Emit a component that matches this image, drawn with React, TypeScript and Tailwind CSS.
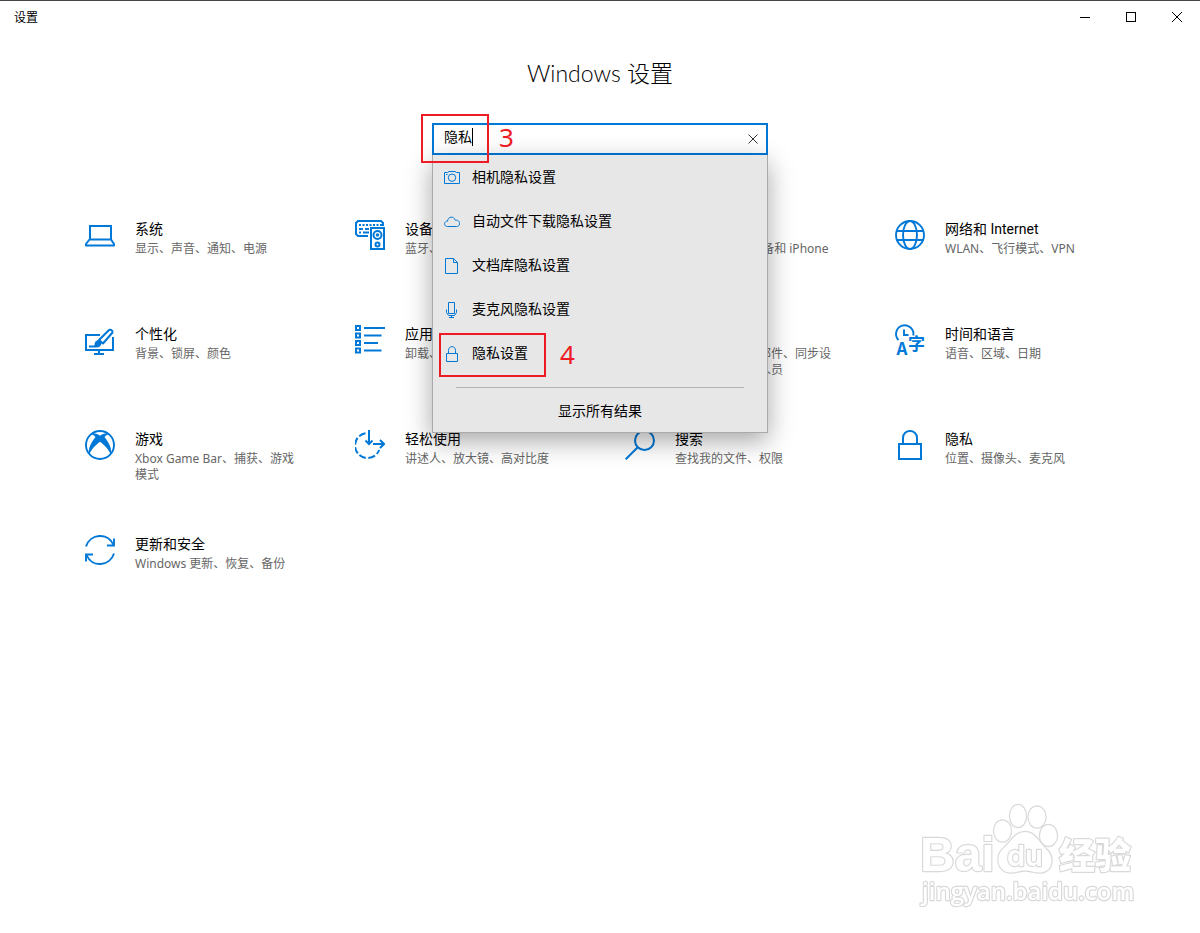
import { useState, type ReactNode } from "react";

type Tile = {
  title: string;
  description: string;
  icon: ReactNode;
};

const LaptopIcon = () => (
  <svg viewBox="0 0 30 30" className="h-[30px] w-[30px] shrink-0" fill="none" stroke="currentColor" strokeWidth="2">
    <path d="M5 19.500V6H26V19.500" />
    <path d="M5 19.500H26L29 24V25.500H1V24L4.500 19.500Z" strokeLinejoin="round" />
  </svg>
);

const DevicesIcon = () => (
  <svg viewBox="0 0 30 30" className="h-[30px] w-[30px] shrink-0" fill="none" stroke="currentColor" strokeWidth="2">
    <path d="M13 16H3L1 14V3L3 1H26L28 3V6" />
    <path d="M4 5H27" strokeDasharray="2 1.500" />
    <path d="M4 9H14" strokeDasharray="4 2 4" />
    <path d="M4 12.500H14" strokeDasharray="2 2 6" />
    <rect x="16" y="8" width="13" height="21" />
    <circle cx="22.500" cy="15" r="4" />
    <circle cx="22.500" cy="15" r="0.800" />
    <circle cx="22.500" cy="24.500" r="2" />
  </svg>
);

const PhoneIcon = () => (
  <svg viewBox="0 0 30 30" className="h-[30px] w-[30px] shrink-0" fill="none" stroke="currentColor" strokeWidth="2">
    <rect x="7" y="1" width="16" height="28" />
    <path d="M12 25H18" />
  </svg>
);

const GlobeIcon = () => (
  <svg viewBox="0 0 30 30" className="h-[30px] w-[30px] shrink-0" fill="none" stroke="currentColor" strokeWidth="1.900">
    <circle cx="15" cy="15" r="14" />
    <ellipse cx="15" cy="15" rx="7" ry="14" />
    <path d="M2 11H28M2 20H28" />
  </svg>
);

const PersonalizationIcon = () => (
  <svg viewBox="0 0 30 30" className="h-[30px] w-[30px] shrink-0" fill="none" stroke="currentColor" strokeWidth="2">
    <path d="M15 10H1V25H28V12" />
    <path d="M14 25V29M9 29H19" />
    <path d="M14 15L23.500 5.500C25 4 28 5 27.500 7.500L18 18.500Z" strokeLinejoin="round" />
    <path d="M4 21.500H8C10 21.500 9.500 16 13.500 16C16 16 17 18 15.500 20C14 22 11.500 21.500 8 21.500Z" fill="currentColor" stroke="none" />
    <path d="M4 21.500H11C14 21.500 16 20 15.500 17.500C14 15 11 16 10.500 19" />
  </svg>
);

const AppsIcon = () => (
  <svg viewBox="0 0 30 30" className="h-[30px] w-[30px] shrink-0" fill="none" stroke="currentColor" strokeWidth="2">
    <path d="M1 1H5V5H1ZM1 8.500H5V12.500H1ZM1 16H5V20H1ZM1 23.500H5V27.500H1Z" />
    <path d="M9 3H30M9 10.500H26.500M9 18H23M9 25.500H26.500" />
  </svg>
);

const AccountIcon = () => (
  <svg viewBox="0 0 30 30" className="h-[30px] w-[30px] shrink-0" fill="none" stroke="currentColor" strokeWidth="2">
    <circle cx="15" cy="8" r="7" />
    <path d="M3 29C3 12 27 12 27 29" />
  </svg>
);

const LanguageIcon = () => (
  <svg viewBox="0 0 30 30" className="h-[30px] w-[30px] shrink-0 overflow-visible" fill="none" stroke="currentColor" strokeWidth="1.900">
    <path d="M3.500 15A8.700 8.700 0 1 1 18.300 10.500" />
    <path d="M9 4.500V10H13.500" />
    <text x="1.500" y="30" fill="currentColor" stroke="none" fontSize="17" fontWeight="700" fontFamily="Noto Sans CJK SC, sans-serif">A</text>
    <text x="13" y="25" fill="currentColor" stroke="none" fontSize="17" fontWeight="700" fontFamily="Noto Sans CJK SC, sans-serif">字</text>
  </svg>
);

const XboxIcon = () => (
  <svg viewBox="0 0 30 30" className="h-[30px] w-[30px] shrink-0" fill="none" stroke="currentColor" strokeWidth="1.900">
    <circle cx="15" cy="15" r="14" />
    <path
      d="M6.500 3.500C9.500 2.800 13 4.300 15 5.700C17 4.300 20.500 2.800 23.500 3.500L22.500 4.800C21.500 5 20.500 5.800 19.500 7C23.500 12 27.500 18.500 25.700 24.500C24 20 19.500 15 15 11.800C10.500 15 6 20 4.300 24.500C2.500 18.500 6.500 12 10.500 7C9.500 5.800 8.500 5 7.500 4.800Z"
      fill="currentColor"
      stroke="none"
    />
  </svg>
);

const EaseIcon = () => (
  <svg viewBox="0 0 30 30" className="h-[30px] w-[30px] shrink-0" fill="none" stroke="currentColor" strokeWidth="2">
    <path d="M10.500 3.200A12.500 12.500 0 1 0 24.200 20" strokeDasharray="7 2.400" />
    <path d="M14 0V14M10.500 10.500L14 14L17.500 10.500" />
    <path d="M18 14H29M25 10L29 14L25 18" />
  </svg>
);

const SearchIcon = () => (
  <svg viewBox="0 0 30 30" className="h-[30px] w-[30px] shrink-0" fill="none" stroke="currentColor" strokeWidth="2">
    <circle cx="19.500" cy="10.500" r="9.500" />
    <path d="M12.500 17.500L0.700 29.300" />
  </svg>
);

const LockIcon = () => (
  <svg viewBox="0 0 30 30" className="h-[30px] w-[30px] shrink-0" fill="none" stroke="currentColor" strokeWidth="2">
    <rect x="4" y="14" width="22" height="15" />
    <path d="M8 14V8C8 -1.300 22 -1.300 22 8V14" />
  </svg>
);

const UpdateIcon = () => (
  <svg viewBox="0 0 30 30" className="h-[30px] w-[30px] shrink-0" fill="none" stroke="currentColor" strokeWidth="1.900">
    <path d="M1 11.500C5 -1.500 23 -3 28.500 10" />
    <path d="M29 3.500V10.500H22" />
    <path d="M29 18.500C25 31.500 7 33 1.500 20" />
    <path d="M1 26.500V19.500H8" />
  </svg>
);

const tiles: Tile[] = [
  { title: "系统", description: "显示、声音、通知、电源", icon: <LaptopIcon /> },
  { title: "设备", description: "蓝牙、打印机、鼠标", icon: <DevicesIcon /> },
  { title: "手机", description: "连接 Android 设备和 iPhone", icon: <PhoneIcon /> },
  { title: "网络和 Internet", description: "WLAN、飞行模式、VPN", icon: <GlobeIcon /> },
  { title: "个性化", description: "背景、锁屏、颜色", icon: <PersonalizationIcon /> },
  { title: "应用", description: "卸载、默认应用、可选功能", icon: <AppsIcon /> },
  { title: "帐户", description: "你的帐户、电子邮件、同步设置、工作、其他人员", icon: <AccountIcon /> },
  { title: "时间和语言", description: "语音、区域、日期", icon: <LanguageIcon /> },
  { title: "游戏", description: "Xbox Game Bar、捕获、游戏模式", icon: <XboxIcon /> },
  { title: "轻松使用", description: "讲述人、放大镜、高对比度", icon: <EaseIcon /> },
  { title: "搜索", description: "查找我的文件、权限", icon: <SearchIcon /> },
  { title: "隐私", description: "位置、摄像头、麦克风", icon: <LockIcon /> },
  { title: "更新和安全", description: "Windows 更新、恢复、备份", icon: <UpdateIcon /> },
];

const suggestions = [
  {
    label: "相机隐私设置",
    icon: <path d="M0.500 2.500H3.500L5 1.500H11L12.500 2.500H15.500V13.500H0.500ZM8 4A3.700 3.700 0 1 0 8 11.400A3.700 3.700 0 1 0 8 4ZM2 4.500H3.500" />,
  },
  {
    label: "自动文件下载隐私设置",
    icon: <path d="M3.500 12.500C-0.500 12.500 -0.200 7 3.500 7.200C3.800 2.500 10 1.500 11.300 6.200C16.500 5.500 17 12.500 12.500 12.500Z" />,
  },
  {
    label: "文档库隐私设置",
    icon: <path d="M1.500 0.500H9.500L13.500 4.500V15.500H1.500ZM9.500 0.500V4.500H13.500" />,
  },
  {
    label: "麦克风隐私设置",
    icon: <path d="M4.500 0.500H10.500V11.500H4.500ZM2.500 7.500V10.500L4.500 13.500H10.500L12.500 10.500V7.500M7.500 13.500V15.500M5 15.500H10" strokeLinejoin="round" />,
  },
  {
    label: "隐私设置",
    icon: <path d="M2.500 7.500H13.500V15.500H2.500ZM4.500 7.500V4.500C4.500 -0.700 11.500 -0.700 11.500 4.500V7.500" />,
  },
];

const TitleBar = () => (
  <header className="flex h-[33px] items-center justify-between border-t border-[#444444]">
    <span className="pl-[14px] text-xs">设置</span>
    <div className="flex">
      <button aria-label="最小化" className="flex h-8 w-[46px] items-center justify-center">
        <svg viewBox="0 0 10 10" className="h-[10px] w-[10px]" stroke="currentColor">
          <path d="M0 5.500H10" />
        </svg>
      </button>
      <button aria-label="最大化" className="flex h-8 w-[46px] items-center justify-center">
        <svg viewBox="0 0 10 10" className="h-[10px] w-[10px]" fill="none" stroke="currentColor">
          <rect x="0.500" y="0.500" width="9" height="9" />
        </svg>
      </button>
      <button aria-label="关闭" className="flex h-8 w-[46px] items-center justify-center">
        <svg viewBox="0 0 10 10" className="h-[10px] w-[10px]" stroke="currentColor">
          <path d="M0 0L10 10M10 0L0 10" />
        </svg>
      </button>
    </div>
  </header>
);

const SearchBox = () => {
  const [query, setQuery] = useState("隐私");

  return (
    <div className="relative mx-auto mt-[34px] w-[336px]">
      <div className="flex h-8 items-center border-2 border-[#0078d7] bg-white">
        <input
          type="text"
          aria-label="查找设置"
          value={query}
          onChange={(e) => setQuery(e.target.value)}
          className="h-full min-w-0 flex-1 pb-[6px] pl-[10px] text-sm caret-transparent outline-none"
        />
        <button aria-label="清除" onClick={() => setQuery("")} className="flex h-7 w-[26px] items-center justify-center">
          <svg viewBox="0 0 10 10" className="h-[10px] w-[10px]" stroke="#333333">
            <path d="M0.500 0.500L9.500 9.500M9.500 0.500L0.500 9.500" />
          </svg>
        </button>
      </div>
      <span className="absolute top-[5px] left-10 h-[18px] w-px bg-black" />

      <div className="absolute top-8 left-0 z-10 w-full border border-t-0 border-[#aaaaaa] bg-[#e7e7e7] shadow-[0_8px_24px_rgba(0,0,0,0.35)]">
        <ul className="pt-px">
          {suggestions.map((item) => (
            <li key={item.label}>
              <button className="flex h-11 w-full items-center gap-3 pl-[11px] text-sm">
                <svg viewBox="0 0 16 16" className="h-4 w-4 shrink-0 text-[#0078d7]" fill="none" stroke="currentColor">
                  {item.icon}
                </svg>
                <span className="pb-1">{item.label}</span>
              </button>
            </li>
          ))}
        </ul>
        <div className="mx-[23px] mt-[11px] border-t border-[#b4b4b4]" />
        <button className="flex h-11 w-full items-center justify-center text-sm">显示所有结果</button>
      </div>

      {/* Step markers */}
      <div className="pointer-events-none absolute -top-[9px] -left-[11px] z-20 h-[49px] w-[68px] border-2 border-[#ed1c24]" />
      <span className="absolute -top-0.5 left-[67px] z-20 font-['Noto_Sans',sans-serif] text-[26px] leading-8 text-[#ed1c24]">3</span>
      <div className="pointer-events-none absolute top-[210px] left-[7px] z-20 h-11 w-[107px] border-2 border-[#ed1c24]" />
      <span className="absolute top-[215px] left-32 z-20 font-['Noto_Sans',sans-serif] text-[26px] leading-8 text-[#ed1c24]">4</span>
    </div>
  );
};

const Watermark = () => (
  <svg
    viewBox="0 0 240 120"
    className="pointer-events-none fixed right-[44px] bottom-[13px] h-[120px] w-[240px]"
    fill="#ffffff"
    stroke="#d9d9d9"
    strokeWidth="2.400"
    strokeLinejoin="round"
    style={{ paintOrder: "stroke" }}
  >
    <text x="4" y="71" fontSize="48" fontWeight="700" fontFamily="Liberation Sans, sans-serif">Bai</text>
    <ellipse cx="86.500" cy="31" rx="8.500" ry="10.500" />
    <ellipse cx="102" cy="16" rx="8" ry="11" />
    <ellipse cx="121" cy="17" rx="8.500" ry="10.500" />
    <ellipse cx="132.500" cy="35.500" rx="8.500" ry="10.500" />
    <path d="M109 32C99 32 95 42 88 48C78 56 82 73 95 72.500C100 72.500 104 70.500 109 70.500C115 70.500 119 73 125 72.500C138 71 138 56 130 49C123 42 119 32 109 32Z" />
    <text x="91" y="66" fontSize="29" fontWeight="600" fontFamily="Inter, sans-serif">du</text>
    <text x="143" y="69" fontSize="36" fontWeight="900" fontFamily="Noto Sans CJK SC, sans-serif">经验</text>
    <text x="6" y="100" fontSize="24" fontWeight="600" fontFamily="Open Sans, sans-serif">jingyan.baidu.com</text>
  </svg>
);

const App = () => (
  <div className="min-h-screen bg-white font-['Noto_Sans_CJK_SC',sans-serif] text-black">
    <TitleBar />
    <main>
      <h1 className="mt-6 text-center font-['Lato','Noto_Sans_CJK_SC',sans-serif] text-[23px] leading-8 font-light">
        Windows 设置
      </h1>
      <SearchBox />
      <nav className="mx-auto mt-[60px] grid max-w-[1080px] grid-cols-1 sm:grid-cols-2 lg:grid-cols-4">
        {tiles.map((tile) => (
          <a key={tile.title} href="#" className="flex min-h-[105px] gap-5 pt-[5px] pr-[30px] pl-[25px]">
            <span className="text-[#0078d7]">{tile.icon}</span>
            <span>
              <span className="block font-['Roboto','Noto_Sans_CJK_SC',sans-serif] text-sm leading-[18px]">{tile.title}</span>
              <span className="block pt-[3px] font-['Noto_Sans','Noto_Sans_CJK_SC',sans-serif] text-xs leading-4 text-[#666666]">
                {tile.description}
              </span>
            </span>
          </a>
        ))}
      </nav>
    </main>
    <Watermark />
  </div>
);

export default App;
